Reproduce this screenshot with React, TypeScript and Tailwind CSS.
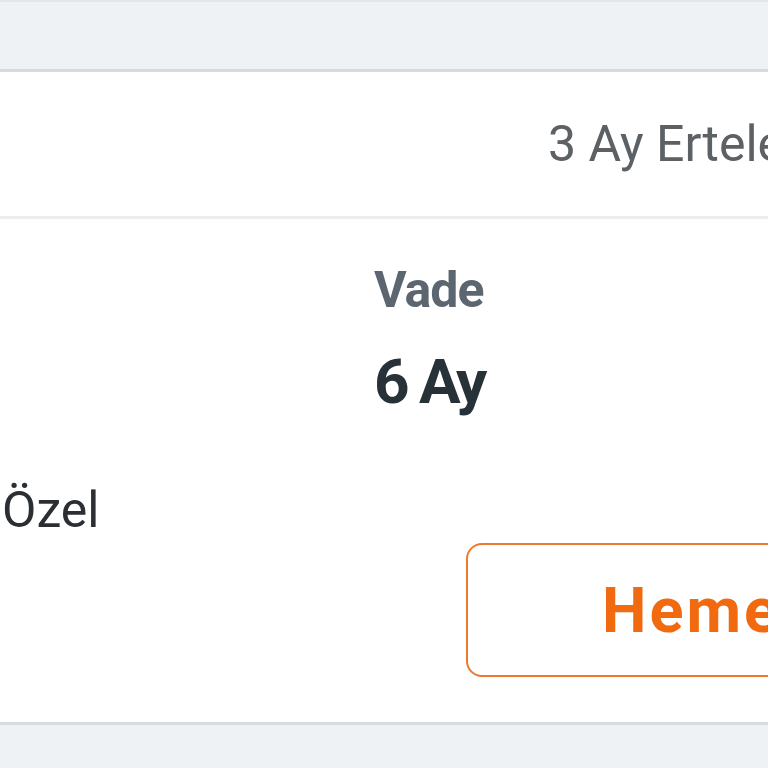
import React from "react";

export default function App() {
  const font = { fontFamily: "Roboto, 'Noto Sans', sans-serif" };
  return (
    <div className="w-[768px] h-[768px] overflow-hidden bg-[#eef2f5] flex flex-col" style={font}>
      <div className="h-[2px] bg-[#e2e6e9]" />
      <div className="h-[70px] bg-[#eef2f5] border-b-[3px] border-[#d7dadd]" />
      <div className="h-[144px] bg-white flex items-center pl-[548px] whitespace-nowrap">
        <span className="text-[50px] text-[#5c6166] leading-none">3 Ay Ertelemeli</span>
      </div>
      <div className="h-[509px] bg-white border-t-[3px] border-[#ebedef] border-b-[3px] border-b-[#d9dcdf] flex flex-col">
        <div className="flex flex-col items-start pl-[374px] pt-[46px] whitespace-nowrap">
          <span className="text-[50px] font-bold text-[#5b6670] leading-none tracking-[-1px]">Vade</span>
          <span className="text-[62px] font-bold text-[#263238] leading-none mt-[36px] tracking-[-3px]">6 Ay</span>
        </div>
        <div className="pl-[2px] mt-[72px] whitespace-nowrap">
          <span className="text-[50px] text-[#2b2f33] leading-none">Özel</span>
        </div>
        <div className="pl-[466px] mt-[8px] whitespace-nowrap">
          <div className="w-[440px] h-[134px] border-2 border-[#ec7a2c] rounded-[16px] flex items-center pl-[134px]">
            <span className="text-[63px] font-bold text-[#f26a10] leading-none tracking-[3px]">Hemen Başvur</span>
          </div>
        </div>
      </div>
      <div className="flex-1 bg-[#eef2f5]" />
    </div>
  );
}
